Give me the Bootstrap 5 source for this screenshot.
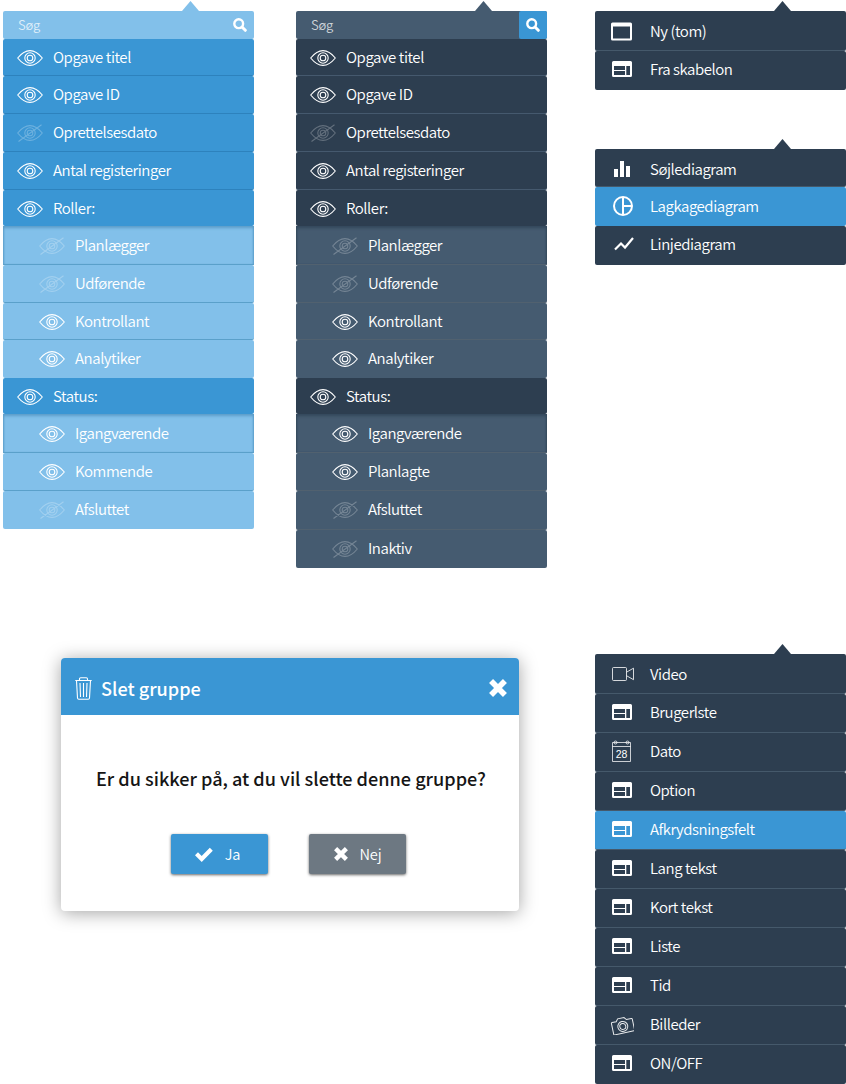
<!DOCTYPE html>
<html lang="da">
<head>
<meta charset="utf-8">
<meta name="viewport" content="width=device-width, initial-scale=1">
<title>Menuer og dialog</title>
<link href="https://cdn.jsdelivr.net/npm/bootstrap@5.3.0/dist/css/bootstrap.min.css" rel="stylesheet">
<style>
:root{--blue:#3a96d4;--sky:#82c0ea;--navy:#2d3e50;--slate:#455b70}
body{font-family:"Noto Sans CJK SC",sans-serif;font-size:15px;letter-spacing:-.45px;line-height:20px;font-weight:350;color:#fff;background:#fff;overflow:hidden}
svg{display:block;flex:none}
.page{width:846px;height:1084px}
.left-side{width:595px;padding:11px 48px 0 3px}
.right-side{width:251px;padding-top:11px}
.panel{width:251px;--tip:var(--navy)}
.panel::before{content:"";position:absolute;left:179px;top:-10px;width:17px;height:10px;background:var(--tip);clip-path:polygon(50% 0,100% 100%,0 100%)}
.panel .entry{height:38px;padding:0 0 1px 14px;border-bottom:1px solid var(--line);border-radius:2px;background:var(--bg);gap:10px}
.panel .entry.h36{height:36px;border-bottom:0}
.panel .entry.h37{height:37px}
.panel .entry.h39{height:39px}
.panel .entry.plain{border-bottom:0;padding-bottom:3px}
.panel .entry.sub{padding-left:36px;background:var(--subbg);border-color:var(--subline)}
.panel .entry.sub.first{box-shadow:inset 0 3px 3px -1px var(--shade),inset 2px 0 2px -1px var(--shade),inset -2px 0 2px -1px var(--shade);border-radius:0}
.panel .entry.raise{padding-bottom:3px}
.theme-blue .entry svg,.theme-dark .entry svg{margin-top:2px}
.finder{height:28px;background:var(--subbg);border-radius:2px;font-size:13px;letter-spacing:-.2px;color:#ffffffc0;padding-left:15px}
.finder .go{width:28px;height:28px;border-radius:2px}
.theme-blue{--tip:var(--sky);--bg:var(--blue);--line:#2d82bd;--subbg:var(--sky);--subline:#5aa0ca;--shade:#5c9dc9}
.theme-dark{--tip:var(--slate);--bg:var(--navy);--line:#45596e;--subbg:var(--slate);--subline:#51616f;--shade:#34485c}
.theme-dark .go{background:var(--blue)}
.menu{--bg:var(--navy);--line:#45596b}
.panel.menu .entry{height:39px;padding:0 0 3px 15px;gap:16px}
.panel.menu .entry.h38{height:38px;padding:2px 0 0 15px}
.panel.menu .entry.h40{height:40px;padding-bottom:0}
.panel.menu .entry.plain{padding-bottom:4px}
.panel.menu .entry.picked{background:var(--blue);padding-bottom:3px}
.panel.menu .entry.plain.picked{padding-bottom:1px}
.off{opacity:.25}
.confirm{width:458px;height:253px;margin:90px 0 0 58px;border-radius:4px;box-shadow:0 2px 18px rgba(0,0,0,.36);color:#151515;background:#fff;letter-spacing:0}
.confirm header{height:57px;background:var(--blue);border-radius:4px 4px 0 0;color:#fff;padding:3px 12px 0 14px;font-size:18.1px;font-weight:500}
.confirm header span{margin-left:9px}
.question{font-size:18.1px;font-weight:500;padding:52px 0 0 2px;line-height:22px}
.answers{gap:41px;margin-top:45px;padding-right:3px}
.answer{width:97px;height:40px;border:0;border-radius:2px;color:#fff;box-shadow:0 1px 3px rgba(0,0,0,.6);background:var(--blue);gap:12px;padding:0 4px 0 0;font-size:14.6px;letter-spacing:-.2px;font-weight:350}
.answer.no{background:#6d7882;padding:0}
</style>
</head>
<body>
<svg width="0" height="0" class="position-absolute">
<defs>
<symbol id="eye" viewBox="0 0 26 16"><g fill="none" stroke="#fff" stroke-width="1.1"><path d="M.7 8C4.500 3.300 8.500.6 13 .6S21.500 3.300 25.300 8C21.500 12.700 17.500 15.400 13 15.400S4.500 12.700.7 8z"/><circle cx="13" cy="8" r="5.200"/><circle cx="13" cy="8" r="2.800"/></g></symbol>
<symbol id="eyeoff" viewBox="0 0 26 18"><g fill="none" stroke="#fff" stroke-width="1.100"><path d="M.7 9C4.500 4.300 8.500 1.600 13 1.600S21.500 4.300 25.300 9C21.500 13.700 17.500 16.400 13 16.400S4.500 13.700.7 9zM1.500 17.500 24.500.8"/><circle cx="13" cy="9" r="5.200"/><circle cx="13" cy="9" r="2.800"/></g></symbol>
<symbol id="lens" viewBox="0 0 14 14"><g fill="none" stroke="#fff"><circle cx="5.700" cy="5.700" r="4.400" stroke-width="2.400"/><path d="M9 9l3.300 3.300" stroke-width="3" stroke-linecap="round"/></g></symbol>
<symbol id="blank" viewBox="0 0 24 20"><path fill="#fff" fill-rule="evenodd" d="M2.500 1.500h18q1.500 0 1.500 1.500v15q0 1.500-1.500 1.500h-18Q1 19.500 1 18V3Q1 1.500 2.500 1.500zM3 5.500v12h17v-12z"/></symbol>
<symbol id="form" viewBox="0 0 24 20"><path fill="#fff" fill-rule="evenodd" d="M3.500 2h17Q22 2 22 3.500v13q0 1.500-1.500 1.500h-17Q2 18 2 16.500v-13Q2 2 3.500 2zM4 7v4h11V7zm0 5v4h11v-4zM16.300 7v9H20V7z"/></symbol>
<symbol id="bars" viewBox="0 0 24 20"><path fill="#fff" d="M4 10h4v8H4zM10 2h4v16h-4zM16 7h4v11h-4z"/></symbol>
<symbol id="pie" viewBox="0 0 24 20"><g fill="none" stroke="#fff" stroke-width="2"><circle cx="13" cy="10" r="9"/><path d="M13 1v18M13 10h9"/></g></symbol>
<symbol id="trend" viewBox="0 0 24 20"><path fill="none" stroke="#fff" stroke-width="2.200" d="M5 15.500l6-6 4 4L23 4"/></symbol>
<symbol id="video" viewBox="0 0 24 20"><g fill="none" stroke="#fff" stroke-opacity=".8"><rect x="2.500" y="3.500" width="14" height="13" rx="1"/><path d="M16.500 8.200l7-4v11.500l-7-4"/></g></symbol>
<symbol id="camera" viewBox="0 0 24 22"><g fill="none" stroke="#fff" stroke-opacity=".9" transform="translate(0 2) rotate(-12 12.500 11)"><path d="M3 5.500h4.200l2-2.500h6.500l2 2.500h5q.8 0 .8.800v11q0 .8-.8.800H3q-.8 0-.8-.8v-11q0-.8.8-.8z"/><circle cx="12.700" cy="11.500" r="5"/><circle cx="12.700" cy="11.500" r="3"/></g></symbol>
<symbol id="cross" viewBox="0 0 16 16"><path stroke="#fff" stroke-width="5" stroke-linecap="square" d="M3.600 3.600l8.800 8.800M12.400 3.600l-8.800 8.800"/></symbol>
</defs>
</svg>
<main class="page d-flex">
 <div class="left-side">
  <div class="d-flex justify-content-between">
   <section class="panel theme-blue position-relative">
    <div class="finder d-flex align-items-center justify-content-between"><span>Søg</span><div class="go d-flex align-items-center justify-content-center"><svg width="14" height="14"><use href="#lens"/></svg></div></div>
    <div class="entry h37 d-flex align-items-center"><svg width="26" height="16"><use href="#eye"/></svg><span>Opgave titel</span></div>
    <div class="entry d-flex align-items-center"><svg width="26" height="16"><use href="#eye"/></svg><span>Opgave ID</span></div>
    <div class="entry d-flex align-items-center"><svg class="off" width="26" height="18"><use href="#eyeoff"/></svg><span>Oprettelsesdato</span></div>
    <div class="entry d-flex align-items-center"><svg width="26" height="16"><use href="#eye"/></svg><span>Antal registeringer</span></div>
    <div class="entry h36 d-flex align-items-center"><svg width="26" height="16"><use href="#eye"/></svg><span>Roller:</span></div>
    <div class="entry sub first h39 d-flex align-items-center"><svg class="off" width="26" height="18"><use href="#eyeoff"/></svg><span>Planlægger</span></div>
    <div class="entry sub d-flex align-items-center"><svg class="off" width="26" height="18"><use href="#eyeoff"/></svg><span>Udførende</span></div>
    <div class="entry sub h37 d-flex align-items-center"><svg width="26" height="16"><use href="#eye"/></svg><span>Kontrollant</span></div>
    <div class="entry sub plain d-flex align-items-center"><svg width="26" height="16"><use href="#eye"/></svg><span>Analytiker</span></div>
    <div class="entry h36 d-flex align-items-center"><svg width="26" height="16"><use href="#eye"/></svg><span>Status:</span></div>
    <div class="entry sub first h39 d-flex align-items-center"><svg width="26" height="16"><use href="#eye"/></svg><span>Igangværende</span></div>
    <div class="entry sub d-flex align-items-center"><svg width="26" height="16"><use href="#eye"/></svg><span>Kommende</span></div>
    <div class="entry sub plain d-flex align-items-center"><svg class="off" width="26" height="18"><use href="#eyeoff"/></svg><span>Afsluttet</span></div>
   </section>
   <section class="panel theme-dark position-relative">
    <div class="finder d-flex align-items-center justify-content-between"><span>Søg</span><div class="go d-flex align-items-center justify-content-center"><svg width="14" height="14"><use href="#lens"/></svg></div></div>
    <div class="entry h37 d-flex align-items-center"><svg width="26" height="16"><use href="#eye"/></svg><span>Opgave titel</span></div>
    <div class="entry d-flex align-items-center"><svg width="26" height="16"><use href="#eye"/></svg><span>Opgave ID</span></div>
    <div class="entry d-flex align-items-center"><svg class="off" width="26" height="18"><use href="#eyeoff"/></svg><span>Oprettelsesdato</span></div>
    <div class="entry d-flex align-items-center"><svg width="26" height="16"><use href="#eye"/></svg><span>Antal registeringer</span></div>
    <div class="entry h36 d-flex align-items-center"><svg width="26" height="16"><use href="#eye"/></svg><span>Roller:</span></div>
    <div class="entry sub first h39 d-flex align-items-center"><svg class="off" width="26" height="18"><use href="#eyeoff"/></svg><span>Planlægger</span></div>
    <div class="entry sub d-flex align-items-center"><svg class="off" width="26" height="18"><use href="#eyeoff"/></svg><span>Udførende</span></div>
    <div class="entry sub h37 d-flex align-items-center"><svg width="26" height="16"><use href="#eye"/></svg><span>Kontrollant</span></div>
    <div class="entry sub plain d-flex align-items-center"><svg width="26" height="16"><use href="#eye"/></svg><span>Analytiker</span></div>
    <div class="entry h36 d-flex align-items-center"><svg width="26" height="16"><use href="#eye"/></svg><span>Status:</span></div>
    <div class="entry sub first h39 d-flex align-items-center"><svg width="26" height="16"><use href="#eye"/></svg><span>Igangværende</span></div>
    <div class="entry sub d-flex align-items-center"><svg width="26" height="16"><use href="#eye"/></svg><span>Planlagte</span></div>
    <div class="entry sub h39 raise d-flex align-items-center"><svg class="off" width="26" height="18"><use href="#eyeoff"/></svg><span>Afsluttet</span></div>
    <div class="entry sub plain d-flex align-items-center"><svg class="off" width="26" height="18"><use href="#eyeoff"/></svg><span>Inaktiv</span></div>
   </section>
  </div>
  <section class="confirm">
   <header class="d-flex align-items-center">
    <svg width="17" height="23" viewBox="0 0 17 23" fill="none" stroke="#fff" stroke-width="1.100"><path d="M.3 3.500h16.400M4.500 3.500V2q0-1.200 1.200-1.200h5.600q1.200 0 1.200 1.200v1.500M1.500 3.500l1 17.500q.1 1.200 1.300 1.200h9.400q1.200 0 1.300-1.200l1-17.500M5 6l.5 14M8.500 6v14M12 6l-.5 14"/></svg>
    <span>Slet gruppe</span>
    <svg class="ms-auto" width="18" height="18"><use href="#cross"/></svg>
   </header>
   <div class="question text-center">Er du sikker på, at du vil slette denne gruppe?</div>
   <div class="answers d-flex justify-content-center">
    <button class="answer d-flex align-items-center justify-content-center"><svg width="18" height="15" viewBox="0 0 18 15"><path fill="none" stroke="#fff" stroke-width="4.200" d="M1.500 6.800l5.200 5.200L16.300 2.200"/></svg><span>Ja</span></button>
    <button class="answer no d-flex align-items-center justify-content-center"><svg width="14" height="14"><use href="#cross"/></svg><span>Nej</span></button>
   </div>
  </section>
 </div>
 <div class="right-side">
  <section class="panel menu position-relative">
   <div class="entry h40 d-flex align-items-center"><svg width="24" height="20"><use href="#blank"/></svg><span>Ny (tom)</span></div>
   <div class="entry plain d-flex align-items-center"><svg width="24" height="20"><use href="#form"/></svg><span>Fra skabelon</span></div>
  </section>
  <section class="panel menu position-relative" style="margin-top:59px">
   <div class="entry h38 d-flex align-items-center"><svg width="24" height="20"><use href="#bars"/></svg><span>Søjlediagram</span></div>
   <div class="entry plain picked d-flex align-items-center"><svg width="24" height="20"><use href="#pie"/></svg><span>Lagkagediagram</span></div>
   <div class="entry plain d-flex align-items-center"><svg width="24" height="20"><use href="#trend"/></svg><span>Linjediagram</span></div>
  </section>
  <section class="panel menu position-relative" style="margin-top:389px">
   <div class="entry h40 d-flex align-items-center"><svg width="24" height="20"><use href="#video"/></svg><span>Video</span></div>
   <div class="entry d-flex align-items-center"><svg width="24" height="20"><use href="#form"/></svg><span>Brugerlste</span></div>
   <div class="entry d-flex align-items-center"><svg width="24" height="24" viewBox="0 0 24 24"><g fill="none" stroke="#fff" stroke-opacity=".75"><path d="M2.500 3.500h18v19h-18zM2.500 7.500h18"/><circle cx="5.500" cy="3.500" r="1.500"/><circle cx="17.500" cy="3.500" r="1.500"/></g><text x="11.500" y="18.500" text-anchor="middle" font-family="Liberation Sans" font-size="10.500" letter-spacing="0" font-weight="400" fill="#fff">28</text></svg><span>Dato</span></div>
   <div class="entry d-flex align-items-center"><svg width="24" height="20"><use href="#form"/></svg><span>Option</span></div>
   <div class="entry picked d-flex align-items-center"><svg width="24" height="20"><use href="#form"/></svg><span>Afkrydsningsfelt</span></div>
   <div class="entry d-flex align-items-center"><svg width="24" height="20"><use href="#form"/></svg><span>Lang tekst</span></div>
   <div class="entry d-flex align-items-center"><svg width="24" height="20"><use href="#form"/></svg><span>Kort tekst</span></div>
   <div class="entry d-flex align-items-center"><svg width="24" height="20"><use href="#form"/></svg><span>Liste</span></div>
   <div class="entry d-flex align-items-center"><svg width="24" height="20"><use href="#form"/></svg><span>Tid</span></div>
   <div class="entry d-flex align-items-center"><svg width="24" height="22"><use href="#camera"/></svg><span>Billeder</span></div>
   <div class="entry plain d-flex align-items-center"><svg width="24" height="20"><use href="#form"/></svg><span>ON/OFF</span></div>
  </section>
 </div>
</main>
<script src="https://cdn.jsdelivr.net/npm/bootstrap@5.3.0/dist/js/bootstrap.bundle.min.js"></script>
</body>
</html>
